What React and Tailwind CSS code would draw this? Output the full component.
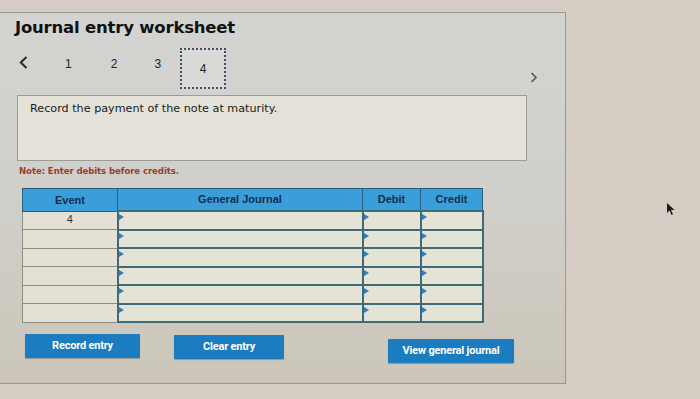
import React from 'react';

const ROWS = ['4', '', '', '', '', ''];

// Little blue flag marking an editable cell
const Marker = () => (
  <span className="absolute left-0 top-[2px] w-0 h-0 border-y-[3px] border-y-transparent border-l-[5px] border-l-[#2f7fc0]" />
);

const Button = ({ children, className }) => (
  <button
    className={`h-[24px] bg-[#1b7cbf] text-white text-[11px] font-bold font-['Roboto','Liberation_Sans',sans-serif] tracking-[-0.2px] rounded-[1px] shadow-[0_1px_1px_rgba(0,0,0,0.25)] ${className}`}
  >
    {children}
  </button>
);

export default function App() {
  return (
    <div className="relative w-[700px] h-[399px] overflow-hidden bg-[#d5cdc3] font-['DejaVu_Sans',sans-serif]">
      {/* worksheet panel */}
      <div className="-ml-px mt-[12px] w-[567px] h-[372px] border border-[#999890] bg-gradient-to-b from-[#d3d4d1] via-[#d0cfca] to-[#ccc6b9] flex flex-col">
        <h1 className="pl-[15px] pt-[4px] text-[16.5px] font-bold text-[#111] leading-[22px] tracking-[-0.2px]">
          Journal entry worksheet
        </h1>

        {/* step navigation */}
        <div className="relative mt-[9px] h-[41px] flex items-center font-['Liberation_Sans',sans-serif] text-[12px] text-[#222]">
          <svg className="ml-[19px] -mt-[12px]" width="9" height="13" viewBox="0 0 9 13">
            <polyline points="7.5,1 1.8,6.5 7.5,12" fill="none" stroke="#2a2a2a" strokeWidth="2" />
          </svg>
          <span className="ml-[37px] -mt-[10px]">1</span>
          <span className="ml-[39px] -mt-[10px]">2</span>
          <span className="ml-[37px] -mt-[10px]">3</span>
          <span className="ml-[19px] w-[46px] h-[41px] border-2 border-dotted border-[#3b4f6a] bg-[#d9dad6] flex items-center justify-center">4</span>
          <svg className="absolute left-[530px] top-[24px]" width="8" height="11" viewBox="0 0 8 11">
            <polyline points="1.5,1 6,5.5 1.5,10" fill="none" stroke="#555" strokeWidth="1.6" />
          </svg>
        </div>

        {/* instruction box */}
        <div className="ml-[17px] mt-[6px] w-[510px] h-[66px] border border-[#9d9c94] bg-[#e4e2d8] px-[12px] pt-[5px]">
          <p className="text-[11.2px] text-[#1a1a1a]">Record the payment of the note at maturity.</p>
        </div>

        <p className="ml-[19px] mt-[4px] text-[8.6px] font-bold text-[#9a3f2c] tracking-[-0.1px]">
          Note: Enter debits before credits.
        </p>

        {/* journal table */}
        <table className="ml-[22px] mt-[10px] w-[460px] border-collapse table-fixed font-['Liberation_Sans',sans-serif] text-[11px]">
          <colgroup>
            <col className="w-[95px]" />
            <col className="w-[245px]" />
            <col className="w-[58px]" />
            <col className="w-[62px]" />
          </colgroup>
          <thead>
            <tr className="h-[23px] bg-[#3a9edb] text-[#12304a] font-bold">
              <th className="border border-[#2a5d80] font-bold">Event</th>
              <th className="border border-[#2a5d80] font-bold">General Journal</th>
              <th className="border border-[#2a5d80] font-bold">Debit</th>
              <th className="border border-[#2a5d80] font-bold">Credit</th>
            </tr>
          </thead>
          <tbody>
            {ROWS.map((ev, i) => (
              <tr key={i} className="h-[18.5px]">
                <td className="border border-[#8f8e85] bg-[#e3e1d3] text-center align-top text-[#333] leading-[15px]">{ev}</td>
                <td className="relative border-2 border-[#3e6b78] bg-[#e4e3d5]"><Marker /></td>
                <td className="relative border-2 border-[#3e6b78] bg-[#e4e3d5]"><Marker /></td>
                <td className="relative border-2 border-[#3e6b78] bg-[#e4e3d5]"><Marker /></td>
              </tr>
            ))}
          </tbody>
        </table>

        {/* actions */}
        <div className="mt-[11px] flex items-start">
          <Button className="ml-[25px] w-[115px]">Record entry</Button>
          <Button className="ml-[34px] mt-[1px] w-[110px]">Clear entry</Button>
          <Button className="ml-[104px] mt-[5px] w-[126px]">View general journal</Button>
        </div>
      </div>

      {/* mouse pointer */}
      <svg className="absolute left-[666px] top-[202px]" width="10" height="14" viewBox="0 0 10 14">
        <path d="M1 1 L1 11 L3.5 8.5 L5.5 13 L7 12.3 L5 8 L8.5 8 Z" fill="#1a1a1a" />
      </svg>
    </div>
  );
}
